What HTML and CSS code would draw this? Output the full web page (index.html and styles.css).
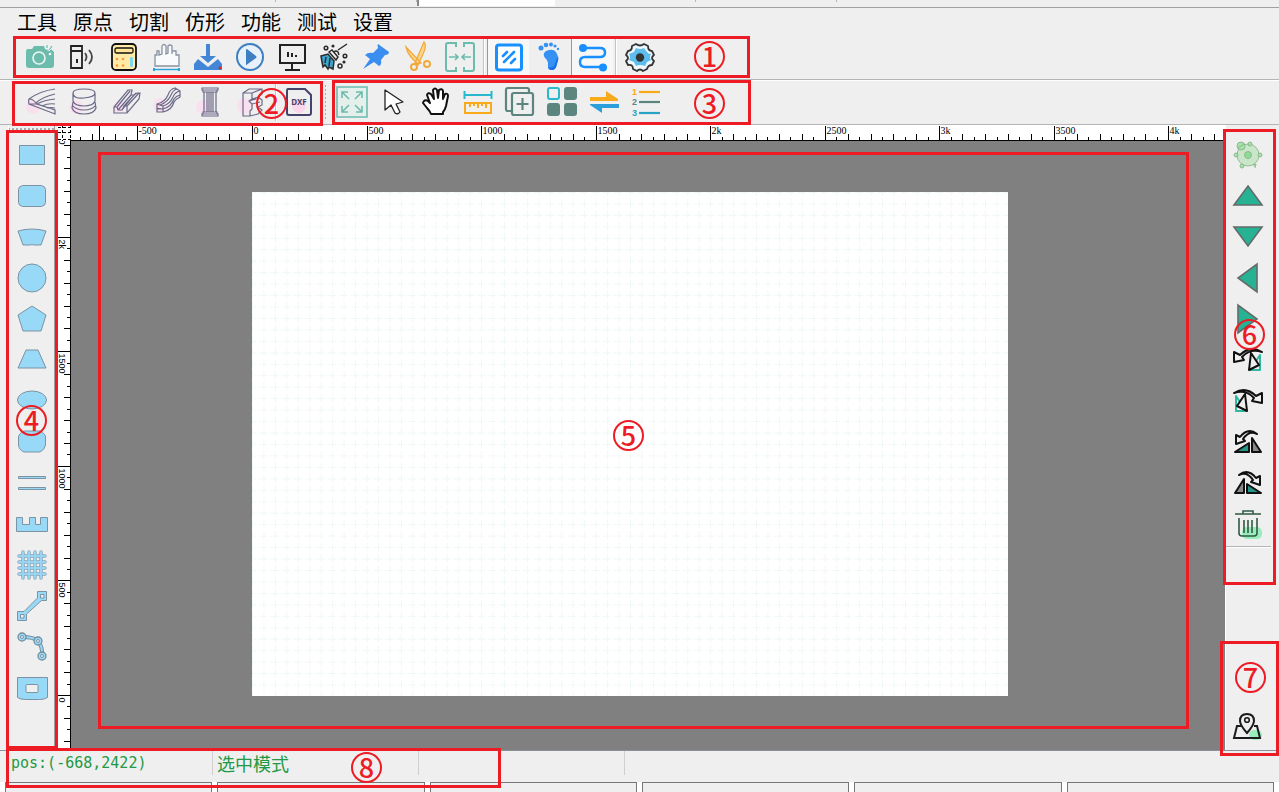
FILE: index.html
```html
<!DOCTYPE html>
<html lang="zh-CN">
<head>
<meta charset="utf-8">
<title>工具</title>
<link rel="stylesheet" href="styles.css">
</head>
<body>
<div class="app">
  <div class="tabstrip"><span class="tab"></span><span class="tab"></span><span class="tab tab-active"></span><span class="tab"></span><span class="tab"></span></div>
  <nav class="menubar">
    <button>工具</button><button>原点</button><button>切割</button><button>仿形</button><button>功能</button><button>测试</button><button>设置</button>
  </nav>

  <div class="toolbar toolbar-main" role="toolbar">
    <button class="tool" aria-label="相机"><svg viewBox="0 0 32 32"><path fill="#6cbcae" d="M4 8h4l2-3h10l1 3h6l3 3v13q0 3-3 3H5q-3 0-3-3V11q0-3 2-3z"/><circle cx="15" cy="17" r="6" fill="none" stroke="#eef6f3" stroke-width="1.6"/><circle cx="26" cy="13" r="1.3" fill="#fff"/><path d="M22 6l1 3M25 5l-1 5M28 7l-3 3" stroke="#eef6f3"/><path d="M23 4v3M28 5l-2 3" stroke="#6cbcae" stroke-width="1.2"/></svg></button>
    <button class="tool" aria-label="读卡"><svg viewBox="0 0 32 32" fill="none" stroke="#222" stroke-width="1.8"><path d="M5 5h11v22H5zM5 10h11"/><path d="M11 18v4" stroke-width="2"/><path d="M19 12q3 4 0 8M23 9q6 7 0 14" stroke="#444"/></svg></button>
    <button class="tool" aria-label="计算器"><svg viewBox="0 0 32 32"><rect x="4" y="3" width="24" height="26" rx="4" fill="#ffeaa6" stroke="#111" stroke-width="1.8"/><rect x="7" y="7" width="18" height="5" rx="1.5" fill="#ffe79a" stroke="#111" stroke-width="1.300"/><g fill="#f79a3e"><circle cx="9" cy="18" r="1.300"/><circle cx="15" cy="18" r="1.300"/><circle cx="9" cy="24.500" r="1.300"/><circle cx="15" cy="24.500" r="1.300"/></g><rect x="22" y="16" width="3" height="10" rx="1" fill="#7dd5ee"/></svg></button>
    <button class="tool" aria-label="宽度"><svg viewBox="0 0 32 32" fill="none"><path stroke="#8992a0" fill="#f8fafb" stroke-width="1.3" d="M5 25V14h2v-4h2v4l3-1V5q2-3 4 0v8l2-1V5q2-2 4 0v8-3h4v4h3v11z"/><path stroke="#29a3dc" stroke-width="1.4" d="M4 28.500h25"/><path stroke="#29a3dc" stroke-width="2" d="M4 27v3M29 27v3"/></svg></button>
    <button class="tool" aria-label="下载"><svg viewBox="0 0 32 32" fill="#4386d8"><path d="M14 3h4v12h6l-8 7-8-7h6zM6 18l10 8 10-8 4 5v6H2v-6z"/><circle cx="28" cy="27" r="1.4" fill="#d22"/></svg></button>
    <button class="tool" aria-label="运行"><svg viewBox="0 0 32 32"><circle cx="16" cy="16" r="13" fill="#e8f1fa" stroke="#3e7fc1" stroke-width="2"/><path fill="#3e7fc1" d="M12 8.500v15q0 1 1 0l9-6.500q1-1 0-2l-9-7q-1 0-1 .5z"/></svg></button>
    <button class="tool" aria-label="监视"><svg viewBox="0 0 32 32" fill="none" stroke="#222" stroke-width="2"><path d="M4 4h25v18H4zM16 22v7M9 29h15M12 11v5M16 12v4M20 14v2"/></svg></button>
    <button class="tool" aria-label="清理"><svg viewBox="0 0 32 32" fill="none" stroke="#2b2b2b" stroke-width="1.500"><path fill="#3aa6d0" d="M3 15l7-2 6 7-1 8-4-2-1 2-3-4-2 2-1-5z"/><path d="M11 11l3-2 6 7-2 3zM16 11q2-2 4 0l1 3M20 9L29 3M8 16l-1 6M12 17l-1 8"/><circle cx="8" cy="7" r="1.800"/><circle cx="22" cy="25" r="2"/><circle cx="27" cy="15" r="1.800"/><circle cx="15" cy="5" r=".8"/><circle cx="26" cy="21" r=".8"/></svg></button>
    <button class="tool" aria-label="固定"><svg viewBox="0 0 32 32" fill="#3b8ef0"><path d="M18 3l11 8q0 3-4 3l-4 5q1 5-2 6l-5-4-11 7 7-10-5-4q3-3 8-2l5-5q-1-3 0-4z"/></svg></button>
    <button class="tool" aria-label="剪切"><svg viewBox="0 0 32 32" fill="#fbd78c" stroke="#f2a93b" stroke-width="1.3"><path d="M4 6l15 16-3 1Q6 15 4 6zM22 1q3 4-1 12l-5 11-3-2z"/><circle cx="12" cy="26" r="3" fill="none" stroke-width="2"/><circle cx="25" cy="23" r="3" fill="none" stroke-width="2"/></svg></button>
    <button class="tool" aria-label="合并"><svg viewBox="0 0 32 32" fill="none" stroke="#6cbcae" stroke-width="2"><path d="M12 6V2H4q-2 0-2 2v24q0 2 2 2h8v-4M20 6V2h8q2 0 2 2v24q0 2-2 2h-8v-4"/><path stroke-width="1.600" d="M5 16h9M11 13l3 3-3 3M27 16h-9M21 13l-3 3 3 3"/></svg></button>
    <span class="sep"></span>
    <button class="tool pressed" aria-label="面板"><svg viewBox="0 0 32 32" fill="none" stroke="#1890ff"><rect x="3.500" y="4" width="25" height="25" rx="2.500" fill="#fff" stroke-width="3"/><path stroke-width="2.600" stroke-linecap="round" d="M10 15l4-4M11 21l10-10M18 22l4-4"/></svg></button>
    <button class="tool" aria-label="足迹"><svg viewBox="0 0 32 32" fill="#3691f5"><path d="M12 10q7-3 10 1 3 5 1 10-1 8-5 8-5 0-4-7 0-3-3-5-3-4 1-7z"/><path fill="#1670e8" d="M24 15q1 3-1 8-1 6-5 6-4 0-4-3 6 2 7-4z"/><circle cx="7" cy="7" r="2.500"/><circle cx="12" cy="4" r="2.300"/><circle cx="17" cy="3.500" r="2"/><circle cx="21" cy="5" r="1.600"/><circle cx="24" cy="8" r="1.200"/></svg></button>
    <button class="tool pressed" aria-label="路径"><svg viewBox="0 0 32 32"><path fill="none" stroke="#1890ff" stroke-width="2.500" d="M6 7h17q5 0 5 4.500T23 16H8q-5 0-5 5t5 5h17"/><circle cx="6" cy="7" r="4" fill="#1890ff"/><circle cx="26" cy="26.500" r="4" fill="#1890ff"/></svg></button>
    <span class="sep"></span>
    <button class="tool" aria-label="参数"><svg viewBox="0 0 32 32"><path fill="#eef8fd" stroke="#333" stroke-width="1.800" stroke-linejoin="round" d="M12 3q4 3 8 0l4 2q0 5 4 5l2 4q-4 3 0 6l-2 4q-4 0-5 4l-4 2q-3-3-6 0l-4-2q0-5-5-4l-2-4q4-3 0-6l2-4q4 0 4-5z"/><path fill="#5dbdee" d="M12 7q4 2 8 0l3 4q1 2 4 2-2 3 0 6l-4 2-2 4q-5-2-9 0l-2-4-5-2q2-3 0-6l5-2z"/><circle cx="16" cy="16.500" r="4.200" fill="#333"/></svg></button>
  </div>

  <div class="toolbar toolbar-shapes" role="toolbar">
    <button class="tool tool-3d" aria-label="板材"><svg viewBox="0 0 32 32"><circle cx="7" cy="21" r="7"/><path d="M29 3Q14 5 3 13q-1 2 0 5l26 10v-4l-18-6q7-4 18-5M3 13q4 0 7 4Q16 11 29 8M3 18h8M16 20q6-3 13-2M21 22q4-1 8 0"/></svg></button>
    <button class="tool tool-3d" aria-label="圆柱"><svg viewBox="0 0 32 32"><circle cx="8" cy="21" r="7"/><path d="M5 7q0-4 11-4t11 4-11 5T5 7v8q2 5 11 5t11-5V7M5 16l-1 6q2 6 12 6t12-6l-1-6M4 19q4 5 12 5t12-5"/></svg></button>
    <button class="tool tool-3d" aria-label="角材"><svg viewBox="0 0 32 32"><circle cx="9" cy="21" r="6"/><path d="M4 27v-6L18 4h4l-1 5h3l3-2h3l-1 6-12 14zM4 21h3l1 3h4l2-4h3v7M7 21L20 5M8 24L21 9M12 24L24 9M14 20L26 7M17 20L29 7"/></svg></button>
    <button class="tool tool-3d" aria-label="弯材"><svg viewBox="0 0 32 32"><circle cx="8" cy="19" r="7"/><path d="M5 18v8h6q9-2 11-10 2-3 6-5V5l-5-3q-5 1-7 7-3 7-11 9zM5 18l6 2q7-2 10-9 2-5 7-6M11 20v6M8 19q8-3 11-10 2-5 6-6M5 22q1 1 6 1 8-2 11-10 2-3 6-4"/></svg></button>
    <button class="tool tool-3d" aria-label="立柱"><svg viewBox="0 0 32 32"><circle cx="9" cy="21" r="7"/><path d="M8 2h16v2H8zM9 4h14v2H9zM10 6v20M22 6v20M13 6v20M15 6v20M17 6v20M19 6v20M9 26h14v2H9zM8 28h16v2H8z"/></svg></button>
    <button class="tool tool-3d" aria-label="型材"><svg viewBox="0 0 32 32"><circle cx="9" cy="20" r="8"/><path d="M7 7l6-4h13v5l-4 3 4 3v5l-4 2 4 3-4 4-8 2H7zM7 7h9l10-4M16 7v6l-3 2 3 3v5l-2 2v5M16 13l7-2M13 15l7-2M16 18l8-2"/></svg></button>
    <span class="sep sep-narrow"></span>
    <button class="tool" aria-label="DXF"><svg viewBox="0 0 32 32"><circle cx="16" cy="20" r="7" fill="#fbd6ea"/><path fill="none" stroke="#45426b" stroke-width="2" d="M5 3h17l6 6v18q0 2-2 2H6q-2 0-2-2V5q0-2 1-2z"/><text class="dxf" x="16" y="19">DXF</text></svg></button>
    <span class="grip"></span>
    <button class="tool" aria-label="适应窗口"><svg viewBox="0 0 32 32" fill="none" stroke="#6cbcae" stroke-width="1.600"><path fill="#e5efec" d="M1 1h30v30H1z"/><path d="M6 12V6h6M6 6l7 7M20 6h6v6M26 6l-7 7M6 20v6h6M6 26l7-7M26 20v6h-6M26 26l-7-7"/></svg></button>
    <button class="tool" aria-label="选择"><svg viewBox="0 0 32 32"><path fill="#fff" stroke="#222" stroke-width="1.300" stroke-linejoin="round" d="M7 4v20l6-5 4 8q3 2 5-1l-4-8 7-2z"/></svg></button>
    <button class="tool" aria-label="平移"><svg viewBox="0 0 32 32"><path fill="#fff" stroke="#111" stroke-width="2" stroke-linejoin="round" d="M11 28q-1-3-4-6l-4-5q1-4 5-2l2 2L7 9q1-3 4-1l3 5-1-9q2-3 4 0l1 8 1-8q3-2 4 1v8l2-5q3-1 3 2l-2 10q-1 4-3 6v2z"/></svg></button>
    <button class="tool" aria-label="测量"><svg viewBox="0 0 32 32" fill="none"><path stroke="#29b9cc" stroke-width="2" d="M2 9h28M2.500 5v8M29.500 5v8"/><path stroke="#f8aa1b" stroke-width="2" d="M3 17h26v10H3zM8 17v4M12 17v3M16 17v5M20 17v3M24 17v5"/></svg></button>
    <button class="tool" aria-label="复制"><svg viewBox="0 0 32 32" fill="none" stroke="#5c8580" stroke-width="2.200"><path d="M7 25H4q-2 0-2-2V4q0-2 2-2h19q2 0 2 2v2"/><rect x="8" y="7" width="21" height="22" rx="2"/><path d="M18.500 12v12M12.500 18h12"/></svg></button>
    <button class="tool" aria-label="阵列"><svg viewBox="0 0 32 32" fill="#5c8580"><rect x="2" y="2" width="11" height="11" rx="2" fill="none" stroke="#29b9cc" stroke-width="2"/><rect x="18" y="1" width="13" height="13" rx="3"/><rect x="1" y="17" width="13" height="13" rx="3"/><rect x="18" y="17" width="13" height="13" rx="3"/></svg></button>
    <button class="tool" aria-label="交换"><svg viewBox="0 0 32 32"><path fill="#f8aa1b" d="M2 11h16V5l12 8v2H2z"/><path fill="#2a9fdb" d="M31 18H2v1l12 8v-5h17z"/></svg></button>
    <button class="tool" aria-label="排序"><svg viewBox="0 0 32 32" stroke-width="2.200"><path stroke="#f8aa1b" d="M9 6h21"/><path stroke="#5c8580" d="M9 16h21"/><path stroke="#29a3c4" d="M9 27h21"/><g class="order"><text x="2" y="9" fill="#f8aa1b">1</text><text x="2" y="19" fill="#5c8580">2</text><text x="2" y="30" fill="#29a3c4">3</text></g></svg></button>
  </div>

  <main class="workspace">
    <div class="side side-left" role="toolbar">
      <button class="tool shape" aria-label="矩形"><svg viewBox="0 0 32 32"><path d="M3.500 6.500h25v19h-25z"/></svg></button>
      <button class="tool shape" aria-label="圆角矩形"><svg viewBox="0 0 32 32"><path d="M6.500 5.500h19q4 1 4 4v13q0 3-4 4h-19q-4-1-4-4v-13q0-3 4-4z"/></svg></button>
      <button class="tool shape" aria-label="扇形"><svg viewBox="0 0 32 32"><path d="M2 10q14-4 28 0l-5 14h-7q-2-1-4 0H7z"/></svg></button>
      <button class="tool shape" aria-label="圆"><svg viewBox="0 0 32 32"><circle cx="16" cy="16" r="14"/></svg></button>
      <button class="tool shape" aria-label="五边形"><svg viewBox="0 0 32 32"><path d="M16 3l14 9-5 16H7L2 12z"/></svg></button>
      <button class="tool shape" aria-label="梯形"><svg viewBox="0 0 32 32"><path d="M10 6h12l8 18H2z"/></svg></button>
      <button class="tool shape" aria-label="椭圆"><svg viewBox="0 0 32 32"><ellipse cx="16" cy="15" rx="14.500" ry="9"/></svg></button>
      <button class="tool shape" aria-label="腰形"><svg viewBox="0 0 32 32"><path d="M8 5h16q6 3 5.500 7v7q-1 5-5.500 7H8q-5-2-5.500-7v-7Q2 8 8 5z"/></svg></button>
      <button class="tool shape" aria-label="平行线"><svg viewBox="0 0 32 32"><path d="M2.500 9.500h27v2h-27zM2.500 20.500h27v2h-27z"/></svg></button>
      <button class="tool shape" aria-label="齿形"><svg viewBox="0 0 32 32"><path d="M.5 9.500h6v7h7v-7h6v7h5v-7h7v14H.5z"/></svg></button>
      <button class="tool shape" aria-label="网格"><svg viewBox="0 0 32 32" fill="none" stroke-linecap="round"><path stroke="#86a5b8" stroke-width="3.400" d="M7 3v26M13 3v26M19 3v26M25 3v26M3 7h26M3 13h26M3 19h26M3 25h26"/><path stroke="#98d5f3" stroke-width="2" d="M7 3v26M13 3v26M19 3v26M25 3v26M3 7h26M3 13h26M3 19h26M3 25h26"/></svg></button>
      <button class="tool shape" aria-label="直线"><svg viewBox="0 0 32 32" fill-rule="evenodd"><path d="M21.500 1.500h9v9h-5L10.500 24v6.500h-9v-9H8L21.500 8zM24.500 4.500v3.500h3.500V4.500zM4.500 24.500v3.500h3.500v-3.500z"/></svg></button>
      <button class="tool shape" aria-label="曲线"><svg viewBox="0 0 32 32" fill="none"><path stroke="#72909f" stroke-width="4" d="M6 6q12 0 16 4 5 6 4 15"/><path stroke="#98d5f3" stroke-width="2" d="M6 6q12 0 16 4 5 6 4 15"/><g stroke="#72909f" stroke-width="1.300"><circle cx="6" cy="6" r="4"/><circle cx="22" cy="10" r="4"/><circle cx="26" cy="25" r="4"/></g><g class="hole"><circle cx="6" cy="6" r="1.500"/><circle cx="22" cy="10" r="1.500"/><circle cx="26" cy="25" r="1.500"/></g></svg></button>
      <button class="tool shape" aria-label="孔板"><svg viewBox="0 0 32 32" fill-rule="evenodd"><path d="M1.500 5.500h30v20q-3 2-8 2h-14q-5 0-8-2zM11 12.500q-1 0-1 1v6q0 1 1 1h10q1 0 1-1v-6q0-1-1-1z"/></svg></button>
    </div>

    <div class="stage">
      <svg class="corner" viewBox="0 0 13 16"><path d="M4.500 0v16M12.500 0v16M0 2.500h13M0 7.500h13M0 14.500h13"/></svg>
      <svg class="ruler ruler-x" id="ruler-x"></svg>
      <svg class="ruler ruler-y" id="ruler-y"></svg>
      <div class="canvas">
        <svg class="sheet" width="756" height="504"><defs><pattern id="grid" width="11.455" height="11.455" patternUnits="userSpaceOnUse"><path d="M0 .5h4M7 .5h4.500M.5 0v4M.5 7v4.500"/></pattern></defs><rect width="100%" height="100%" fill="url(#grid)"/></svg>
        <div class="mark mark-canvas"><span class="num">5</span></div>
      </div>
    </div>

    <div class="side side-right" role="toolbar">
      <button class="tool" aria-label="旋转"><svg viewBox="0 0 32 32" fill="#c9e6c9" stroke="#86ad86" stroke-width=".8"><circle cx="16" cy="16" r="11"/><circle cx="16" cy="16" r="3.500" fill="#8fdc98"/><g fill="#a4e3a8"><circle cx="9" cy="7" r="4"/><path d="M6 9l6-4"/><circle cx="18" cy="5" r="2"/><circle cx="28" cy="16" r="2"/><circle cx="4" cy="16" r="2"/><circle cx="10" cy="27" r="2"/><path d="M21 26l3-1-1 4"/></g></svg></button>
      <button class="tool arrow" aria-label="上移"><svg viewBox="0 0 32 32"><path d="M16 6l14 19H2z"/></svg></button>
      <button class="tool arrow" aria-label="下移"><svg viewBox="0 0 32 32"><path d="M2 6h28L16 25z"/></svg></button>
      <button class="tool arrow" aria-label="左移"><svg viewBox="0 0 32 32"><path d="M25 2v28L6 16z"/></svg></button>
      <button class="tool arrow" aria-label="右移"><svg viewBox="0 0 32 32"><path d="M6 2v28l19-14z"/></svg></button>
      <button class="tool turn" aria-label="左转"><svg viewBox="0 0 32 32"><path stroke="#2fb8a0" d="M18 26h10V11l-4 6"/><path d="M19 9l-2 17 10-5zM30 8Q18 1 8 11L2 8v10l10-2-2-3Q18 4 30 8z"/></svg></button>
      <button class="tool turn" aria-label="右转"><svg viewBox="0 0 32 32"><path stroke="#2fb8a0" d="M14 26H4V11l4 6"/><path d="M13 9l2 17-10-5zM2 8q12-7 22 3l6-3v10l-10-2 2-3Q14 4 2 8z"/></svg></button>
      <button class="tool turn" aria-label="水平镜像"><svg viewBox="0 0 32 32"><path fill="#249687" d="M3 26l14-9v9z"/><path fill="#888" d="M20 12v14h9z"/><path d="M25 8Q16 1 8 11l-4-2v9l9-3-2-2q6-9 14-5z"/></svg></button>
      <button class="tool turn" aria-label="垂直镜像"><svg viewBox="0 0 32 32"><path fill="#888" d="M12 12v14H3z"/><path fill="#249687" d="M15 17v9h14z"/><path d="M7 8q9-7 17 3l4-2v9l-9-3 2-2Q15 4 7 8z"/></svg></button>
      <button class="tool" aria-label="删除"><svg viewBox="0 0 32 32"><rect x="10" y="19" width="20" height="12" rx="5" fill="#9becbc"/><path fill="none" stroke="#315a43" stroke-width="1.600" d="M3 6h26M11 6V3h10v3M7 10v15q0 3 3 3h12q3 0 3-3V10M12 12v13M16 12v13M20 12v13"/></svg></button>
      <span class="rule"></span>
      <button class="tool locate" aria-label="定位"><svg viewBox="0 0 32 32"><rect x="17" y="19" width="13" height="10" rx="5" fill="#9becbc"/><path fill="none" stroke="#1b1b1b" stroke-width="2" d="M9 15H5L2 27h26l-3-12h-3"/><path fill="#eee" stroke="#1b1b1b" stroke-width="2" d="M15 22Q8 14 8 10q0-7 7-7t7 7q0 4-7 12z"/><circle cx="15" cy="9" r="2.300" fill="none" stroke="#1b1b1b" stroke-width="1.600"/></svg></button>
    </div>
  </main>

  <footer class="status"><span class="cell cell-pos">pos:(-668,2422)</span><span class="cell">选中模式</span><span class="cell"></span></footer>
  <div class="panels"><i></i><i></i><i></i><i></i><i></i><i></i></div>

  <div class="mark mark-1"><span class="num">1</span></div>
  <div class="mark mark-2"><span class="num">2</span></div>
  <div class="mark mark-3"><span class="num">3</span></div>
  <div class="mark mark-4"><span class="num">4</span></div>
  <div class="mark mark-6"><span class="num">6</span></div>
  <div class="mark mark-7"><span class="num">7</span></div>
  <div class="mark mark-8"><span class="num">8</span></div>
</div>
<script src="rulers.js"></script>
</body>
</html>
```

FILE: styles.css
```css
* { box-sizing: border-box; }
body { margin: 0; background: #efefef; font-family: "Noto Sans CJK SC", sans-serif; color: #000; }
button { border: 0; padding: 0; background: none; font: inherit; color: inherit; }
.app { position: relative; display: flex; flex-direction: column; min-height: 100vh; overflow: hidden; }

.tabstrip { display: flex; height: 8px; border-bottom: 1px solid #a0a0a0; padding-bottom: 1px; }
.tab { width: 141px; border-right: 1px solid #b8b8b8; height: 2px; }
.tab:first-child { width: 276px; }
.tab-active { height: 6px; width: 138px; background: #fff; border-left: 2px solid #888; border-right: 0; }

.menubar { display: flex; gap: 16px; height: 28px; padding-left: 17px; font-size: 20px; line-height: 28px; }

.toolbar { display: flex; align-items: center; padding-bottom: 1px; border-bottom: 1px solid #b4b4b4; }
.toolbar-main { height: 44px; padding-left: 19px; }
.toolbar-shapes { height: 45px; padding-left: 21px; border-top: 1px solid #fff; }
.tool { display: flex; align-items: center; justify-content: center; flex: none; width: 42px; height: 42px; }
.tool svg { width: 32px; height: 32px; }
.pressed { border-left: 1px solid #999; background: #f7f7f7; }
.sep { width: 6px; height: 38px; background: linear-gradient(90deg, transparent 2px, #c4c4c4 2px, #c4c4c4 3px, #fff 3px, #fff 4px, transparent 4px); }
.sep-narrow { width: 5px; }
.grip { width: 11px; height: 36px; background: radial-gradient(circle, #aaa 1px, transparent 1px) 0 0 / 11px 4px; }
.tool-3d svg { fill: none; stroke: #6b6988; stroke-width: 1.2px; }
.tool-3d circle { fill: #f9e0ee; stroke: none; }
.dxf { font: bold 8px "Noto Sans", sans-serif; fill: #45426b; text-anchor: middle; }
.order { font: bold 9px "Liberation Sans", sans-serif; stroke: none; }

.workspace { display: flex; flex: 1; border-bottom: 1px solid #8b8f96; }
.side { display: flex; flex-direction: column; padding-top: 9px; }
.side .tool { width: auto; height: 41px; }
.side-left { width: 47px; margin: 0 3px 0 8px; border-left: 1px solid #fff; border-right: 1px solid #a0a0a0; background: radial-gradient(circle, #aaa 1px, transparent 1px) 2px 2px / 4px 4px repeat-x; }
.side-right { width: 46px; margin-right: 8px; border-left: 1px solid #fff; }
.side-right .tool { margin-right: 2px; }
.rule { height: 2px; margin-top: 2px; border-top: 1px solid #b4b4b4; border-bottom: 1px solid #fff; }
.side .locate { margin-top: auto; margin-bottom: 3px; }
.shape svg { stroke: #7b93a3; }
.shape path, .shape circle, .shape ellipse { fill: #98d9f7; }
.shape svg[fill="none"] path { fill: none; }
.shape .hole circle { fill: #efefef; }
.arrow svg { fill: #28b294; stroke: #646b69; stroke-width: 1.6px; }
.turn svg { fill: none; stroke: #111; stroke-width: 2px; stroke-linejoin: round; }

.stage { flex: 1; display: grid; grid-template-columns: 13px 1fr; grid-template-rows: 16px 1fr; background: #fff; min-width: 0; }
.corner { width: 13px; height: 16px; fill: none; stroke: #000; stroke-dasharray: 3 2; }
.ruler { width: 100%; height: 100%; overflow: hidden; stroke: #000; shape-rendering: crispEdges; }
.ruler text { stroke: none; fill: #000; }
.ruler-x { border-bottom: 1px solid #000; font: 10px "Liberation Serif", serif; }
.ruler-y { border-right: 1px solid #000; font: 9px "Liberation Sans", sans-serif; }
.canvas { position: relative; background: #808080; }
.sheet { position: absolute; left: 181px; top: 51px; background: #fff; }
.sheet path { stroke: #f0f7f7; fill: none; }

.status { display: flex; align-items: flex-start; height: 31px; padding-left: 7px; font-size: 18px; line-height: 24px; color: #229944; }
.cell { width: 206px; height: 24px; padding-left: 4px; border-right: 1px solid #cfcfcf; white-space: nowrap; }
.cell-pos { font: 15px/24px "DejaVu Sans Mono", monospace; }
.panels { display: grid; grid-template-columns: repeat(6, 1fr); gap: 5px; height: 10px; padding: 0 5px; background: #fff; }
.panels i { border: 1px solid #777; border-bottom: 0; background: #efefef; }

.mark { position: absolute; border: 3px solid #ed1c24; color: #ed1c24; pointer-events: none; }
.num { position: absolute; width: 31px; height: 31px; border: 2px solid; border-radius: 50%; font-size: 27px; line-height: 26px; font-weight: 500; text-align: center; }
.mark-1 { left: 13px; top: 36px; width: 737px; height: 42px; }
.mark-1 .num { right: 22px; top: 2px; }
.mark-2 { left: 12px; top: 81px; width: 311px; height: 45px; }
.mark-2 .num { right: 33px; top: 4px; }
.mark-3 { left: 332px; top: 80px; width: 419px; height: 45px; }
.mark-3 .num { right: 23px; top: 5px; }
.mark-4 { left: 6px; top: 130px; bottom: 43px; width: 52px; }
.mark-4 .num { left: 7px; top: 272px; }
.mark-canvas { left: 27px; right: 36px; top: 11px; bottom: 21px; }
.mark-canvas .num { left: 512px; top: 265px; }
.mark-6 { right: 3px; top: 129px; width: 53px; height: 456px; }
.mark-6 .num { left: 8px; top: 187px; }
.mark-7 { right: 0; bottom: 36px; width: 59px; height: 115px; }
.mark-7 .num { left: 12px; top: 18px; }
.mark-8 { left: 6px; bottom: 4px; width: 495px; height: 40px; }
.mark-8 .num { left: 342px; top: 1px; }
```

FILE: rulers.js
```js
const STEP = 114.55 / 10;
const label = v => (v >= 2000 && v % 1000 === 0 ? v / 1000 + 'k' : String(v));
const tickSize = i => (i % 10 === 0 ? 14 : i % 2 === 0 ? 6 : 3);

function horizontal(svg, origin) {
  const width = svg.clientWidth;
  let out = '<path d="M28.500 1v14"/>';
  for (let i = -15; origin + i * STEP < width; i++) {
    const x = Math.round(origin + i * STEP) + 0.5;
    if (x < 0) continue;
    out += `<path d="M${x} 15v-${tickSize(i)}"/>`;
    if (i % 10 === 0 && x + 24 < width) out += `<text x="${x + 1}" y="9">${label(i * 50)}</text>`;
  }
  svg.innerHTML = out;
}

function vertical(svg, origin) {
  let out = '';
  for (let i = -4; i <= 50; i++) {
    const y = Math.round(origin - i * STEP) + 0.5;
    out += `<path d="M12 ${y}h-${tickSize(i)}"/>`;
    if (i % 10 === 0) out += `<text transform="translate(1 ${y + 2}) rotate(90)">${label(i * 50)}</text>`;
  }
  svg.innerHTML = out;
}

horizontal(document.getElementById('ruler-x'), 181);
vertical(document.getElementById('ruler-y'), 554);
```
